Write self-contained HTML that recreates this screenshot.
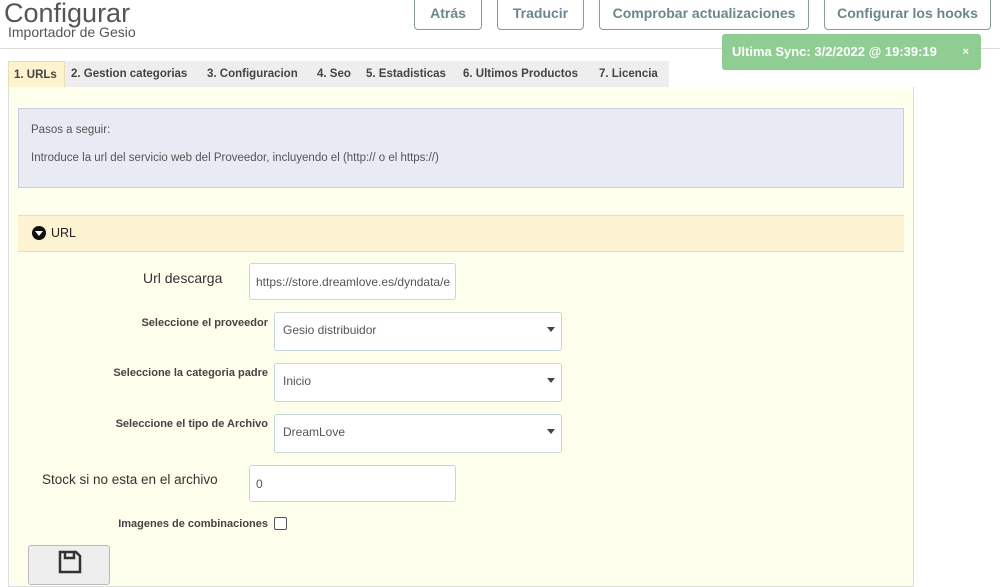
<!DOCTYPE html>
<html><head><meta charset="utf-8"><style>
*{box-sizing:border-box;margin:0;padding:0}
body{width:1000px;height:569px;overflow:hidden;background:#fff;font-family:"Liberation Sans",sans-serif;position:relative;color:#333}
.a{position:absolute}
.btn{position:absolute;top:-4px;height:34px;border:1px solid #8a9a9c;border-radius:4px;background:#fff;color:#6c868e;font-size:14px;font-weight:bold;text-align:center;line-height:32px}
.tabs{left:8px;top:61px;width:661px;height:27px;background:#eee}
.tab{position:absolute;top:0;height:27px;line-height:27px;font-size:11.5px;font-weight:bold;color:#444}
.lbl{position:absolute;text-align:right;font-size:11px;font-weight:bold;color:#444}
.inp{position:absolute;background:#fff;border:1px solid #c7d6db;border-radius:3px;font-size:12px;color:#555;padding-left:6px}
.sel{position:absolute;left:274px;width:288px;height:39px;background:#fff;border:1px solid #c7d6db;border-radius:3px;font-size:12px;color:#555;padding:10px 8px}
.sel:after{content:"";position:absolute;right:6px;top:14px;border:4px solid transparent;border-top:5px solid #444}
</style></head><body>
<div class="a" style="left:4px;top:-2px;font-size:27px;color:#555">Configurar</div>
<div class="a" style="left:8px;top:24px;font-size:14px;color:#555">Importador de Gesio</div>
<div class="btn" style="left:414px;width:68px">Atrás</div>
<div class="btn" style="left:497px;width:87px">Traducir</div>
<div class="btn" style="left:599px;width:210px">Comprobar actualizaciones</div>
<div class="btn" style="left:824px;width:167px">Configurar los hooks</div>
<div class="a" style="left:0;top:48px;width:1000px;height:1px;background:#ddd"></div>
<div class="a" style="left:722px;top:34px;width:259px;height:36px;background:#8fcd93;border-radius:3px;color:#fff;font-weight:bold;font-size:13px;line-height:36px;padding-left:10px">Ultima Sync: 3/2/2022 @ 19:39:19<span style="position:absolute;right:12px;font-size:11px">×</span></div>
<div class="a tabs">
<div class="tab" style="left:0;width:57px;background:#fdf3cd;border:1px solid #e8dfb5;padding-left:5px">1. URLs</div>
<div class="tab" style="left:63px">2. Gestion categorias</div>
<div class="tab" style="left:199px">3. Configuracion</div>
<div class="tab" style="left:309px">4. Seo</div>
<div class="tab" style="left:358px">5. Estadisticas</div>
<div class="tab" style="left:455px">6. Ultimos Productos</div>
<div class="tab" style="left:591px">7. Licencia</div>
</div>
<div class="a" style="left:8px;top:87px;width:906px;height:500px;background:#fefeec;border:1px solid #ddd;border-top:none"></div>
<div class="a" style="left:18px;top:108px;width:886px;height:80px;background:#e8ebf4;border:1px solid #ccd;font-size:11.5px;color:#555;padding:14px 12px;line-height:14px">Pasos a seguir:<br><div style="margin-top:14px">Introduce la url del servicio web del Proveedor, incluyendo el (http:// o el https://)</div></div>
<div class="a" style="left:18px;top:215px;width:886px;height:37px;background:#fdf3d2;border-top:1px solid #ddd;border-bottom:1px solid #ddd;font-size:12.5px;color:#222;line-height:35px;padding-left:33px">URL<span style="position:absolute;left:14px;top:10px;width:14px;height:14px;border-radius:50%;background:#111"></span><span style="position:absolute;left:17px;top:15px;border:4px solid transparent;border-top:5px solid #fff"></span></div>
<div class="a" style="left:143px;top:270px;font-size:14px;color:#333">Url descarga</div>
<div class="inp" style="left:249px;top:263px;width:207px;height:37px;line-height:37px;overflow:hidden;white-space:nowrap">https://store.dreamlove.es/dyndata/e</div>
<div class="lbl" style="left:100px;width:168px;top:317px">Seleccione el proveedor</div>
<div class="sel" style="top:312px">Gesio distribuidor</div>
<div class="lbl" style="left:90px;width:178px;top:367px">Seleccione la categoria padre</div>
<div class="sel" style="top:363px">Inicio</div>
<div class="lbl" style="left:90px;width:178px;top:418px">Seleccione el tipo de Archivo</div>
<div class="sel" style="top:414px">DreamLove</div>
<div class="a" style="left:42px;top:472px;font-size:13.5px;color:#333">Stock si no esta en el archivo</div>
<div class="inp" style="left:249px;top:465px;width:207px;height:37px;line-height:37px">0</div>
<div class="lbl" style="left:90px;width:178px;top:518px">Imagenes de combinaciones</div>
<div class="a" style="left:274px;top:517px;width:13px;height:13px;border:1.5px solid #555;border-radius:2px;background:#fff"></div>
<div class="a" style="left:28px;top:545px;width:82px;height:40px;background:#eee;border:1px solid #bbb;border-radius:3px"></div>
<svg class="a" style="left:58px;top:550px" width="24" height="24" viewBox="0 0 24 24"><path d="M2 2h16l4 4v16H2z M7 2v6h9V2" fill="none" stroke="#333" stroke-width="2.5"/></svg>
</body></html>
